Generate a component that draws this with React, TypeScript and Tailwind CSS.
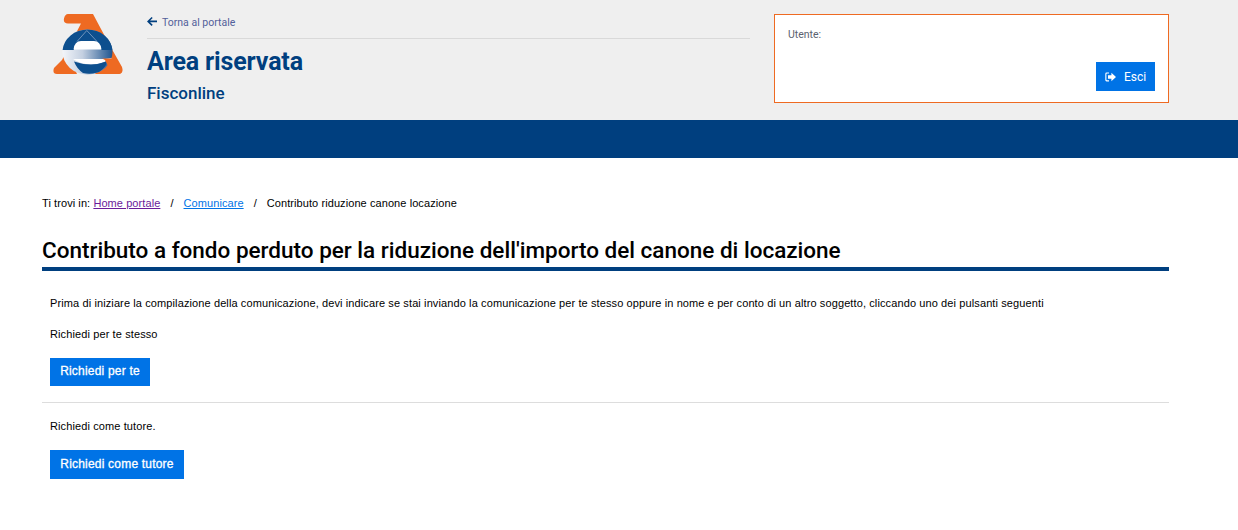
import React from "react";

function Logo() {
  return (
    <svg width="70" height="62" viewBox="0 0 70 62" className="block">
      <defs>
        <linearGradient id="eg" x1="0" x2="1" y1="0" y2="0">
          <stop offset="0" stopColor="#f3f5f9" />
          <stop offset="0.4" stopColor="#c4d0e1" />
          <stop offset="1" stopColor="#1f5590" />
        </linearGradient>
      </defs>
      <path d="M15 0H40L56 30L69 53Q71 60 65 60H42L50 46H18L24 60H4Q-1 60 1 54L9 46L28 9.5H15Q10 9 11 4.5Q12 0 15 0Z" fill="#ee6a22" />
      <ellipse cx="34.5" cy="38" rx="25" ry="22.5" fill="url(#eg)" />
      <path d="M9.6 36A25 22.5 0 0 1 59.4 36H48V35H21V36Z" fill="#0d4f8e" />
      <path d="M33.8 16.5L24 27.5M33.8 16.5L44 27.5" stroke="#6f93bb" strokeWidth="1" fill="none" />
      <path d="M33.8 18L41 27.5H26.8Z" fill="#0d4f8e" />
      <path d="M20.5 35.5Q21.5 27 28 27H41Q47.5 27 48.5 35.5Z" fill="#fff" />
      <path d="M20 45H52L59.5 44Q50 50 38 50.5Q27 50 20 45Z" fill="#fff" />
      <path d="M49 44.5H62L69 54Q70 60 65 60H50L55 52L52 46Z" fill="#ee6a22" />
      <path d="M21 47.5Q29 50.5 38 50.5Q46 50.5 53 47.5Q55 52 46 58Q38 61 30 59Q24 55 21 47.5Z" fill="#0d4f8e" />
    </svg>
  );
}

function BackArrow() {
  return (
    <svg width="10" height="9" viewBox="0 0 10 9" fill="#003f7f" className="block">
      <path d="M4.6 0L5.7 1.1L3.1 3.6H10V5.2H3.1L5.7 7.8L4.6 8.9L0 4.45Z" />
    </svg>
  );
}

function ExitIcon() {
  return (
    <svg width="11" height="10" viewBox="0 0 11 10" fill="#fff" className="block">
      <path d="M4 0.5H1.6Q0.3 0.5 0.3 1.9V8Q0.3 9.4 1.6 9.4H4V8.3H2Q1.4 8.3 1.4 7.6V2.3Q1.4 1.6 2 1.6H4Z" />
      <path d="M6.4 0.8L11 5L6.4 9.2V6.7H3V3.3H6.4Z" />
    </svg>
  );
}

const titleFont = "font-['Roboto','Noto_Sans',sans-serif]";
const bodyFont = "font-['Liberation_Sans',Arial,sans-serif]";
const btn = "block ml-[8px] mt-[18px] bg-[#0073e6] text-white text-[12px] font-normal tracking-[0.2px] pb-[2px] [-webkit-text-stroke:0.3px_white]";

export default function App() {
  return (
    <div className={`min-h-[530px] bg-white ${bodyFont}`}>
      <header className="h-[120px] bg-[#efefef] flex pl-[53px] pr-[69px]">
        <div className="w-[94px] pt-[14px] shrink-0">
          <Logo />
        </div>
        <div className="w-[603px] shrink-0 pt-[13px]">
          <div className={`h-[26px] border-b border-[#d9d9d9] flex items-start gap-[5px] pt-[4px] text-[10.5px] leading-[11px] text-[#52609a] ${titleFont}`}>
            <span><BackArrow /></span>
            <span>Torna al portale</span>
          </div>
          <h1 className={`mt-[8px] text-[25px] leading-[30px] font-bold text-[#003f7f] ${titleFont} tracking-[-0.15px]`}>Area riservata</h1>
          <p className={`mt-[6px] text-[17px] leading-[20px] font-medium text-[#003f7f] ${titleFont}`}>Fisconline</p>
        </div>
        <div className="ml-[24px] w-[396px] h-[89px] mt-[14px] border border-[#ee6a22] bg-white pl-[13px] pr-[13px] pt-[13px] flex flex-col">
          <div className={`text-[10.5px] leading-[14px] text-[#5b6270] ${titleFont}`}>Utente:</div>
          <div className="mt-[20px] flex justify-end">
            <div className={`w-[59px] h-[29px] bg-[#0073e6] text-white flex items-center justify-center gap-[8px] text-[12px] font-normal ${titleFont}`}>
              <ExitIcon />
              <span>Esci</span>
            </div>
          </div>
        </div>
      </header>
      <div className="h-[38px] bg-[#003f7f]" />
      <main className="pl-[42px] pr-[69px] pt-[39px]">
        <nav className="text-[11px] leading-[12px] text-black tracking-[0.08px] flex h-[12px]">
          <span>Ti trovi in:&nbsp;</span>
          <a href="#" className="text-[#6a1b9a] underline">Home portale</a>
          <span className="mx-[10px]">/</span>
          <a href="#" className="text-[#0073e6] underline">Comunicare</a>
          <span className="mx-[10px]">/</span>
          <span>Contributo riduzione canone locazione</span>
        </nav>
        <h2 className={`mt-[26px] h-[32px] text-[22.5px] leading-[30px] font-medium text-black ${titleFont} tracking-normal`}>
          Contributo a fondo perduto per la riduzione dell'importo del canone di locazione
        </h2>
        <div className="h-[4px] bg-[#003f7f]" />
        <section className="text-[11px] leading-[12px] text-black tracking-[0.11px]">
          <p className="pl-[8px] pt-[26px]">
            Prima di iniziare la compilazione della comunicazione, devi indicare se stai inviando la comunicazione per te stesso oppure in nome e per conto di un altro soggetto, cliccando uno dei pulsanti seguenti
          </p>
          <p className="pl-[8px] pt-[19px]">Richiedi per te stesso</p>
          <button className={`${btn} h-[28px] w-[100px]`}>Richiedi per te</button>
          <div className="mt-[16px] border-t border-[#dddddd]" />
          <p className="pl-[8px] pt-[17px]">Richiedi come tutore.</p>
          <button className={`${btn} h-[29px] w-[134px]`}>Richiedi come tutore</button>
        </section>
      </main>
    </div>
  );
}
